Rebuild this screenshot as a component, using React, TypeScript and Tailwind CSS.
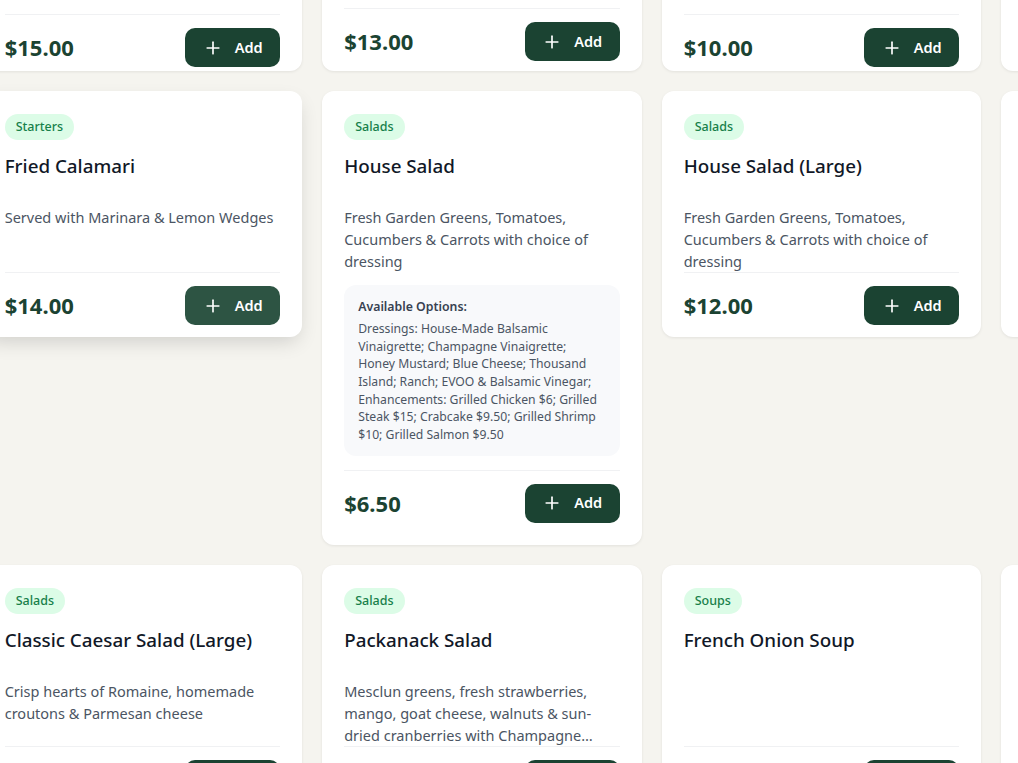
import { Plus } from "lucide-react";

type Item = {
  category: string;
  name: string;
  description?: string;
  options?: string;
  price: string;
  pad: string;
  hovered?: boolean;
};

const items: Item[] = [
  // row 1 (scrolled mostly out of view)
  { category: "Starters", name: "Shrimp Cocktail", description: "Jumbo shrimp served chilled with cocktail sauce", price: "$15.00", pad: "pt-[30px] pb-[4px]" },
  { category: "Starters", name: "Baked Clams", description: "Littleneck clams baked with seasoned breadcrumbs", price: "$13.00", pad: "pt-[24px] pb-[10px]" },
  { category: "Starters", name: "Mozzarella Sticks", description: "Served with Marinara sauce", price: "$10.00", pad: "pt-[30px] pb-[4px]" },
  { category: "Starters", name: "Buffalo Wings", description: "Served with Celery & Blue Cheese", price: "$14.00", pad: "pt-[30px] pb-[4px]" },
  // row 2
  { category: "Starters", name: "Fried Calamari", description: "Served with Marinara & Lemon Wedges", price: "$14.00", pad: "pt-[22px] pb-[12px]", hovered: true },
  {
    category: "Salads",
    name: "House Salad",
    description: "Fresh Garden Greens, Tomatoes, Cucumbers & Carrots with choice of dressing",
    options:
      "Dressings: House-Made Balsamic Vinaigrette; Champagne Vinaigrette; Honey Mustard; Blue Cheese; Thousand Island; Ranch; EVOO & Balsamic Vinegar; Enhancements: Grilled Chicken $6; Grilled Steak $15; Crabcake $9.50; Grilled Shrimp $10; Grilled Salmon $9.50",
    price: "$6.50",
    pad: "pt-[22px] pb-[22px]",
  },
  { category: "Salads", name: "House Salad (Large)", description: "Fresh Garden Greens, Tomatoes, Cucumbers & Carrots with choice of dressing", price: "$12.00", pad: "pt-[22px] pb-[12px]" },
  { category: "Salads", name: "Caesar Salad", description: "Crisp hearts of Romaine, homemade croutons & Parmesan cheese", price: "$7.50", pad: "pt-[22px] pb-[12px]" },
  // row 3
  { category: "Salads", name: "Classic Caesar Salad (Large)", description: "Crisp hearts of Romaine, homemade croutons & Parmesan cheese", price: "$13.00", pad: "pt-[22px] pb-[12px]" },
  { category: "Salads", name: "Packanack Salad", description: "Mesclun greens, fresh strawberries, mango, goat cheese, walnuts & sun-dried cranberries with Champagne vinaigrette", price: "$15.00", pad: "pt-[22px] pb-[12px]" },
  { category: "Soups", name: "French Onion Soup", price: "$9.00", pad: "pt-[22px] pb-[12px]" },
  { category: "Soups", name: "Soup of the Day", description: "Ask your server for today's selection", price: "$8.00", pad: "pt-[22px] pb-[12px]" },
];

function MenuCard({ item }: { item: Item }) {
  return (
    <div
      className={`flex flex-col rounded-xl bg-white px-[22px] ${item.pad} ${
        item.hovered
          ? "shadow-[0_8px_20px_-4px_rgba(0,0,0,0.16)]"
          : "shadow-[0_1px_3px_rgba(0,0,0,0.08)]"
      }`}
    >
      <div className="flex pt-px">
        <span className="flex h-[26px] items-center rounded-full bg-[#dcfce7] px-[11px] pt-px text-[12.5px] font-medium text-[#17804a]">
          {item.category}
        </span>
      </div>
      <h3 className="mt-[12px] min-h-[54px] pt-px text-[18.8px] font-medium leading-[27px] text-[#111827]">
        {item.name}
      </h3>
      <p className="line-clamp-3 h-[66px] text-[14.5px] leading-[22px] text-[#4b5563]">
        {item.description}
      </p>
      {item.options && (
        <div className="mt-[13px] rounded-xl bg-[#f8f9fb] px-[14px] pt-[13px] pb-[12px]">
          <p className="mb-[4px] text-[12.3px] font-semibold leading-[18px] text-[#374151]">
            Available Options:
          </p>
          <p className="text-[12.2px] leading-[17.67px] text-[#4b5563]">{item.options}</p>
        </div>
      )}
      <div className={`${item.options ? "mt-[14px]" : ""} flex items-center justify-between border-t border-[#f0f1f3] pt-[13px]`}>
        <span className="text-[22px] font-bold text-[#1b4332]">{item.price}</span>
        <button
          className={`flex h-[39px] items-center gap-3 rounded-[10px] px-[17.5px] text-[14.5px] font-semibold text-white ${
            item.hovered ? "bg-[#2d5443]" : "bg-[#1b4332]"
          }`}
        >
          <Plus size={20} strokeWidth={2} />
          Add
        </button>
      </div>
    </div>
  );
}

export default function App() {
  return (
    <div className="h-[763px] overflow-hidden bg-[#f5f4ef] font-['Noto_Sans',sans-serif]">
      <div className="-mt-[175px] -ml-[17.3px] grid w-[1338px] grid-cols-[repeat(4,319.5px)] items-start gap-x-5 gap-y-5">
        {items.map((item) => (
          <MenuCard key={item.name} item={item} />
        ))}
      </div>
    </div>
  );
}
